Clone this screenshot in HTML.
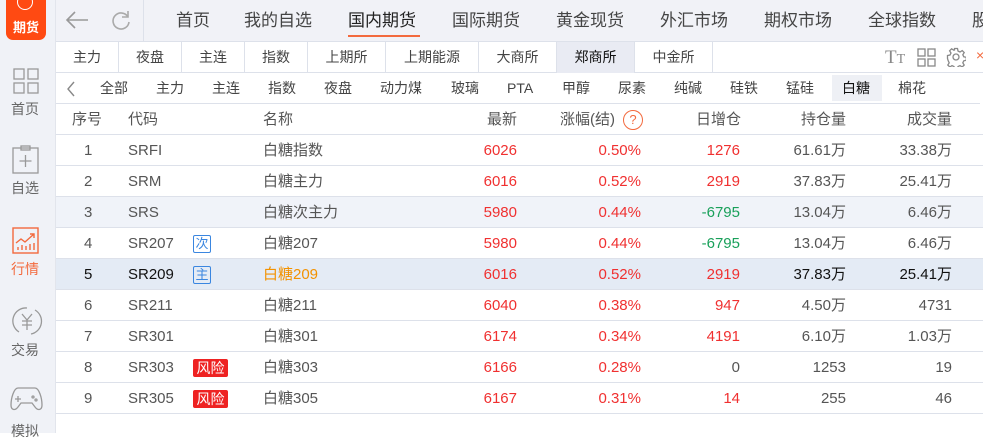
<!DOCTYPE html>
<html><head><meta charset="utf-8"><style>
*{margin:0;padding:0;box-sizing:border-box}
body{width:983px;height:433px;overflow:hidden;background:#fff;font-family:"Liberation Sans","Noto Sans CJK SC",sans-serif;color:#555;position:relative}
.a{position:absolute;white-space:nowrap}
#side{left:0;top:0;width:56px;height:433px;background:#f0f2f7;border-right:1px solid #e2e5ec}
#top{left:56px;top:0;width:927px;height:42px;background:#f1f2f7;border-bottom:1px solid #dde1ea}
.nav{top:6px;font-size:17px;color:#444}
#r2{left:56px;top:42px;width:927px;height:31px;border-bottom:1px solid #dde1ea}
.t2{top:42px;height:31px;line-height:31px;font-size:14px;color:#444;text-align:center;border-right:1px solid #dde1ea}
.t3{top:78px;font-size:14px;color:#444;line-height:20px}
.row{left:56px;width:927px;height:31px;border-bottom:1px solid #dde1ea}
.c{font-size:15px;line-height:31px}
.r{color:#f03030}.g{color:#19a05a}
</style></head><body>
<div class="a" id="side"></div>
<div class="a" style="left:6px;top:0;width:40px;height:40px;background:#ff4a12;border-radius:0 0 7px 7px;color:#fff;font-size:13px;font-weight:bold;text-align:center;padding-top:17px">期货</div>
<div class="a" style="left:17px;top:-6px;width:16px;height:16px;border:1.5px solid #fff;border-radius:50%"></div>
<svg class="a" style="left:13px;top:68px" width="26" height="26" viewBox="0 0 26 26" fill="none" stroke="#999" stroke-width="1.3"><rect x="1" y="1" width="10" height="10"/><rect x="15" y="1" width="10" height="10"/><rect x="1" y="15" width="10" height="10"/><rect x="15" y="15" width="10" height="10"/></svg>
<div class="a" style="left:11px;top:99px;font-size:14px;color:#666">首页</div>
<svg class="a" style="left:12px;top:145px" width="28" height="30" viewBox="0 0 28 30" fill="none" stroke="#999" stroke-width="1.3"><rect x="1" y="3" width="25" height="25"/><rect x="9" y="1" width="9" height="4"/><path d="M13.5 10v12M7.5 16h12"/></svg>
<div class="a" style="left:11px;top:178px;font-size:14px;color:#666">自选</div>
<svg class="a" style="left:12px;top:227px" width="28" height="28" viewBox="0 0 28 28" fill="none" stroke="#f36a3e" stroke-width="1.4"><rect x="1" y="1" width="25" height="25"/><path d="M4 16l5-4 4 3 9-8M18 7h4v4M6 23v-3M10 23v-5M14 23v-4M18 23v-6M22 23v-7"/></svg>
<div class="a" style="left:11px;top:259px;font-size:14px;color:#f36a3e">行情</div>
<svg class="a" style="left:11px;top:305px" width="32" height="32" viewBox="0 0 32 32" fill="none" stroke="#999" stroke-width="1.3"><path d="M8 27A13 13 0 0 1 16 3M24 5a13 13 0 0 1-4 24"/><path d="M11 9l5 6 5-6M16 15v10M11 16h10M11 20h10"/></svg>
<div class="a" style="left:11px;top:340px;font-size:14px;color:#666">交易</div>
<svg class="a" style="left:10px;top:385px" width="33" height="28" viewBox="0 0 33 28" fill="none" stroke="#999" stroke-width="1.3"><path d="M8 3h17c4 0 7 10 7 17 0 5-4 6-7 2l-3-4H11l-3 4c-3 4-7 3-7-2C1 13 4 3 8 3z"/><path d="M8 11v6M5 14h6"/><circle cx="23" cy="12" r="1"/><circle cx="26" cy="15" r="1"/></svg>
<div class="a" style="left:11px;top:421px;font-size:14px;color:#666">模拟</div>

<div class="a" id="top"></div>
<svg class="a" style="left:64px;top:9px" width="26" height="22" viewBox="0 0 26 22" fill="none" stroke="#999" stroke-width="1.6"><path d="M24 11H3M11 3l-8 8 8 8"/></svg>
<svg class="a" style="left:110px;top:9px" width="22" height="22" viewBox="0 0 22 22" fill="none" stroke="#aaa" stroke-width="1.6"><path d="M18 8A8 8 0 1 0 19 13"/><path d="M18 2v6h-6"/></svg>
<div class="a" style="left:143px;top:0;width:1px;height:42px;background:#dde1ea"></div>
<div class="a nav" style="left:176px">首页</div>
<div class="a nav" style="left:244px">我的自选</div>
<div class="a nav" style="left:348px;color:#222">国内期货</div>
<div class="a" style="left:348px;top:35px;width:72px;height:2px;background:#f36a3e"></div>
<div class="a nav" style="left:452px">国际期货</div>
<div class="a nav" style="left:556px">黄金现货</div>
<div class="a nav" style="left:660px">外汇市场</div>
<div class="a nav" style="left:764px">期权市场</div>
<div class="a nav" style="left:868px">全球指数</div>
<div class="a nav" style="left:972px">股</div>

<div class="a" id="r2"></div>
<div class="a t2" style="left:56px;width:63px">主力</div>
<div class="a t2" style="left:119px;width:63px">夜盘</div>
<div class="a t2" style="left:182px;width:63px">主连</div>
<div class="a t2" style="left:245px;width:63px">指数</div>
<div class="a t2" style="left:308px;width:78px">上期所</div>
<div class="a t2" style="left:386px;width:93px">上期能源</div>
<div class="a t2" style="left:479px;width:78px">大商所</div>
<div class="a t2" style="left:557px;width:78px;background:#e9ebf3;color:#111">郑商所</div>
<div class="a t2" style="left:635px;width:78px">中金所</div>
<div class="a" style="left:885px;top:47px;font-size:19px;font-family:'Liberation Serif',serif;color:#888">T<span style="font-size:14px">T</span></div>
<svg class="a" style="left:917px;top:48px" width="19" height="19" viewBox="0 0 19 19" fill="none" stroke="#888" stroke-width="1.3"><rect x="1" y="1" width="7" height="7"/><rect x="11" y="1" width="7" height="7"/><rect x="1" y="11" width="7" height="7"/><rect x="11" y="11" width="7" height="7"/></svg>
<svg class="a" style="left:946px;top:47px" width="20" height="20" viewBox="0 0 20 20" fill="none" stroke="#888" stroke-width="1.3"><circle cx="10" cy="10" r="3"/><path d="M8.5 1.5h3l.5 2.5 2 1 2.2-1.4 2 2-1.4 2.2 1 2 2.5.5v3l-2.5.5-1 2 1.4 2.2-2 2-2.2-1.4-2 1-.5 2.5h-3l-.5-2.5-2-1-2.2 1.4-2-2 1.4-2.2-1-2L1.5 11.5v-3L4 8l1-2-1.4-2.2 2-2L7.8 3.2l.7-.2z"/></svg>
<div class="a" style="left:976px;top:47px;font-size:14px;color:#f36a3e">×</div>

<div class="a" style="left:56px;top:73px;width:924px;height:31px;border-bottom:1px solid #dde1ea"></div>
<div class="a" style="left:832px;top:75px;width:50px;height:26px;background:#eef0f5"></div>
<svg class="a" style="left:66px;top:81px" width="10" height="16" viewBox="0 0 10 16" fill="none" stroke="#888" stroke-width="1.4"><path d="M8 1L2 8l6 7"/></svg>
<div class="a t3" style="left:100px">全部</div>
<div class="a t3" style="left:156px">主力</div>
<div class="a t3" style="left:212px">主连</div>
<div class="a t3" style="left:268px">指数</div>
<div class="a t3" style="left:324px">夜盘</div>
<div class="a t3" style="left:380px">动力煤</div>
<div class="a t3" style="left:451px">玻璃</div>
<div class="a t3" style="left:507px">PTA</div>
<div class="a t3" style="left:562px">甲醇</div>
<div class="a t3" style="left:618px">尿素</div>
<div class="a t3" style="left:674px">纯碱</div>
<div class="a t3" style="left:730px">硅铁</div>
<div class="a t3" style="left:786px">锰硅</div>
<div class="a t3" style="left:842px;color:#111">白糖</div>
<div class="a t3" style="left:898px">棉花</div>

<div class="a row" style="top:104px"></div>
<div class="a c" style="left:72px;top:104px">序号</div>
<div class="a c" style="left:128px;top:104px">代码</div>
<div class="a c" style="left:263px;top:104px">名称</div>
<div class="a c" style="right:466px;top:104px">最新</div>
<div class="a c" style="right:368px;top:104px">涨幅(结)</div>
<div class="a" style="left:623px;top:110px;width:20px;height:20px;border:1.5px solid #f36a3e;border-radius:50%;color:#f36a3e;font-size:13px;text-align:center;line-height:17px">?</div>
<div class="a c" style="right:242px;top:104px">日增仓</div>
<div class="a c" style="right:137px;top:104px">持仓量</div>
<div class="a c" style="right:31px;top:104px">成交量</div>

<div class="a row" style="top:135px"></div>
<div class="a row" style="top:166px"></div>
<div class="a row" style="top:197px;background:#f0f3f9"></div>
<div class="a row" style="top:228px"></div>
<div class="a row" style="top:259px;background:#e4ebf5"></div>
<div class="a row" style="top:290px"></div>
<div class="a row" style="top:321px"></div>
<div class="a row" style="top:352px"></div>
<div class="a row" style="top:383px"></div>

<div class="a c" style="left:84px;top:135px">1</div><div class="a c" style="left:128px;top:135px">SRFI</div><div class="a c" style="left:263px;top:135px">白糖指数</div><div class="a c r" style="right:466px;top:135px">6026</div><div class="a c r" style="right:342px;top:135px">0.50%</div><div class="a c r" style="right:243px;top:135px">1276</div><div class="a c" style="right:137px;top:135px">61.61万</div><div class="a c" style="right:31px;top:135px">33.38万</div>
<div class="a c" style="left:84px;top:166px">2</div><div class="a c" style="left:128px;top:166px">SRM</div><div class="a c" style="left:263px;top:166px">白糖主力</div><div class="a c r" style="right:466px;top:166px">6016</div><div class="a c r" style="right:342px;top:166px">0.52%</div><div class="a c r" style="right:243px;top:166px">2919</div><div class="a c" style="right:137px;top:166px">37.83万</div><div class="a c" style="right:31px;top:166px">25.41万</div>
<div class="a c" style="left:84px;top:197px">3</div><div class="a c" style="left:128px;top:197px">SRS</div><div class="a c" style="left:263px;top:197px">白糖次主力</div><div class="a c r" style="right:466px;top:197px">5980</div><div class="a c r" style="right:342px;top:197px">0.44%</div><div class="a c g" style="right:243px;top:197px">-6795</div><div class="a c" style="right:137px;top:197px">13.04万</div><div class="a c" style="right:31px;top:197px">6.46万</div>
<div class="a c" style="left:84px;top:228px">4</div><div class="a c" style="left:128px;top:228px">SR207</div><div class="a" style="left:193px;top:235px;width:18px;height:18px;border:1px solid #3a86e0;border-radius:2px;color:#3a86e0;font-size:13px;line-height:16px;text-align:center">次</div><div class="a c" style="left:263px;top:228px">白糖207</div><div class="a c r" style="right:466px;top:228px">5980</div><div class="a c r" style="right:342px;top:228px">0.44%</div><div class="a c g" style="right:243px;top:228px">-6795</div><div class="a c" style="right:137px;top:228px">13.04万</div><div class="a c" style="right:31px;top:228px">6.46万</div>
<div class="a c" style="left:84px;top:259px;color:#111">5</div><div class="a c" style="left:128px;top:259px;color:#111">SR209</div><div class="a" style="left:193px;top:266px;width:18px;height:18px;border:1px solid #3a86e0;border-radius:2px;color:#3a86e0;font-size:13px;line-height:16px;text-align:center">主</div><div class="a c" style="left:263px;top:259px;color:#f39200">白糖209</div><div class="a c r" style="right:466px;top:259px">6016</div><div class="a c r" style="right:342px;top:259px">0.52%</div><div class="a c r" style="right:243px;top:259px">2919</div><div class="a c" style="right:137px;top:259px;color:#111">37.83万</div><div class="a c" style="right:31px;top:259px;color:#111">25.41万</div>
<div class="a c" style="left:84px;top:290px">6</div><div class="a c" style="left:128px;top:290px">SR211</div><div class="a c" style="left:263px;top:290px">白糖211</div><div class="a c r" style="right:466px;top:290px">6040</div><div class="a c r" style="right:342px;top:290px">0.38%</div><div class="a c r" style="right:243px;top:290px">947</div><div class="a c" style="right:137px;top:290px">4.50万</div><div class="a c" style="right:31px;top:290px">4731</div>
<div class="a c" style="left:84px;top:321px">7</div><div class="a c" style="left:128px;top:321px">SR301</div><div class="a c" style="left:263px;top:321px">白糖301</div><div class="a c r" style="right:466px;top:321px">6174</div><div class="a c r" style="right:342px;top:321px">0.34%</div><div class="a c r" style="right:243px;top:321px">4191</div><div class="a c" style="right:137px;top:321px">6.10万</div><div class="a c" style="right:31px;top:321px">1.03万</div>
<div class="a c" style="left:84px;top:352px">8</div><div class="a c" style="left:128px;top:352px">SR303</div><div class="a" style="left:193px;top:359px;width:35px;height:18px;background:#ee2222;border-radius:2px;color:#fff;font-size:14px;line-height:18px;text-align:center">风险</div><div class="a c" style="left:263px;top:352px">白糖303</div><div class="a c r" style="right:466px;top:352px">6166</div><div class="a c r" style="right:342px;top:352px">0.28%</div><div class="a c" style="right:243px;top:352px">0</div><div class="a c" style="right:137px;top:352px">1253</div><div class="a c" style="right:31px;top:352px">19</div>
<div class="a c" style="left:84px;top:383px">9</div><div class="a c" style="left:128px;top:383px">SR305</div><div class="a" style="left:193px;top:390px;width:35px;height:18px;background:#ee2222;border-radius:2px;color:#fff;font-size:14px;line-height:18px;text-align:center">风险</div><div class="a c" style="left:263px;top:383px">白糖305</div><div class="a c r" style="right:466px;top:383px">6167</div><div class="a c r" style="right:342px;top:383px">0.31%</div><div class="a c r" style="right:243px;top:383px">14</div><div class="a c" style="right:137px;top:383px">255</div><div class="a c" style="right:31px;top:383px">46</div>
</body></html>
